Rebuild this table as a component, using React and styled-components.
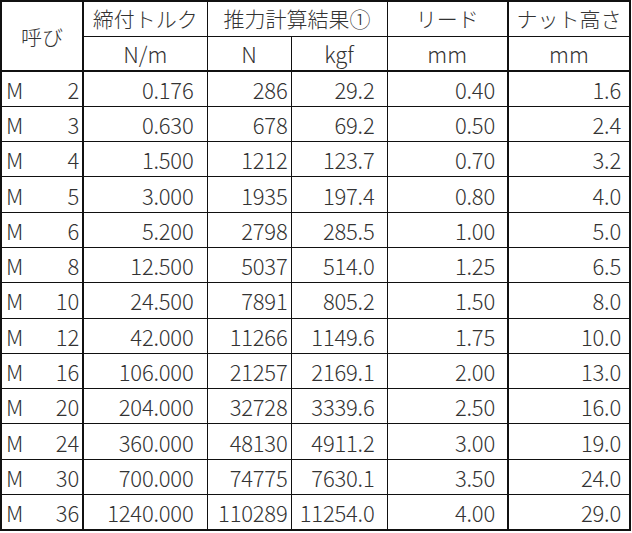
import React from 'react'
import styled, { createGlobalStyle } from 'styled-components'

const GlobalStyle = createGlobalStyle`
  html, body {
    margin: 0;
    padding: 0;
    background: #fff;
  }
  body {
    font-family: "Noto Sans CJK JP", "Noto Sans", sans-serif;
    color: #333;
  }
`

const Table = styled.table`
  border-collapse: collapse;
  table-layout: fixed;
  width: 629px;
  border: 2px solid #111;
  font-weight: 300;
  line-height: 1;
`

const HeadRow = styled.tr`
  height: 35px;
`

const Row = styled.tr`
  height: 35.3px;
`

const HeadCell = styled.th`
  font-weight: 300;
  font-size: ${(p) => (p.$unit ? '22px' : '21px')};
  text-align: center;
  padding: 0;
  border: 1px solid #111;
  border-bottom-width: ${(p) => (p.$last ? '2px' : '1px')};
  border-right-width: ${(p) => (p.$thick ? '2px' : '1px')};
`

const Cell = styled.td`
  font-size: 22px;
  letter-spacing: -0.2px;
  text-align: right;
  padding: 0 ${(p) => p.$pad}px 0 0;
  border: 1px solid #111;
  border-right-width: ${(p) => (p.$thick ? '2px' : '1px')};
  white-space: nowrap;
`

const NameBox = styled.div`
  display: flex;
  justify-content: space-between;
  padding: 0 3px 0 4px;
`

const rows = [
  [2, '0.176', '286', '29.2', '0.40', '1.6'],
  [3, '0.630', '678', '69.2', '0.50', '2.4'],
  [4, '1.500', '1212', '123.7', '0.70', '3.2'],
  [5, '3.000', '1935', '197.4', '0.80', '4.0'],
  [6, '5.200', '2798', '285.5', '1.00', '5.0'],
  [8, '12.500', '5037', '514.0', '1.25', '6.5'],
  [10, '24.500', '7891', '805.2', '1.50', '8.0'],
  [12, '42.000', '11266', '1149.6', '1.75', '10.0'],
  [16, '106.000', '21257', '2169.1', '2.00', '13.0'],
  [20, '204.000', '32728', '3339.6', '2.50', '16.0'],
  [24, '360.000', '48130', '4911.2', '3.00', '19.0'],
  [30, '700.000', '74775', '7630.1', '3.50', '24.0'],
  [36, '1240.000', '110289', '11254.0', '4.00', '29.0'],
]

const pads = [13, 3, 12, 12, 8]

export default function App() {
  return (
    <>
      <GlobalStyle />
      <Table>
        <colgroup>
          <col style={{ width: 82 }} />
          <col style={{ width: 124 }} />
          <col style={{ width: 84 }} />
          <col style={{ width: 96 }} />
          <col style={{ width: 121 }} />
          <col style={{ width: 122 }} />
        </colgroup>
        <thead>
          <HeadRow>
            <HeadCell rowSpan={2} $last $thick>呼び</HeadCell>
            <HeadCell>締付トルク</HeadCell>
            <HeadCell colSpan={2}>推力計算結果①</HeadCell>
            <HeadCell $thick>リード</HeadCell>
            <HeadCell>ナット高さ</HeadCell>
          </HeadRow>
          <HeadRow>
            <HeadCell $last $unit>N/m</HeadCell>
            <HeadCell $last $unit>N</HeadCell>
            <HeadCell $last $unit>kgf</HeadCell>
            <HeadCell $last $unit $thick>mm</HeadCell>
            <HeadCell $last $unit>mm</HeadCell>
          </HeadRow>
        </thead>
        <tbody>
          {rows.map(([size, ...vals]) => (
            <Row key={size}>
              <Cell $pad={0} $thick>
                <NameBox>
                  <span>M</span>
                  <span>{size}</span>
                </NameBox>
              </Cell>
              {vals.map((v, i) => (
                <Cell key={i} $pad={pads[i]} $thick={i === 3}>
                  {v}
                </Cell>
              ))}
            </Row>
          ))}
        </tbody>
      </Table>
    </>
  )
}
